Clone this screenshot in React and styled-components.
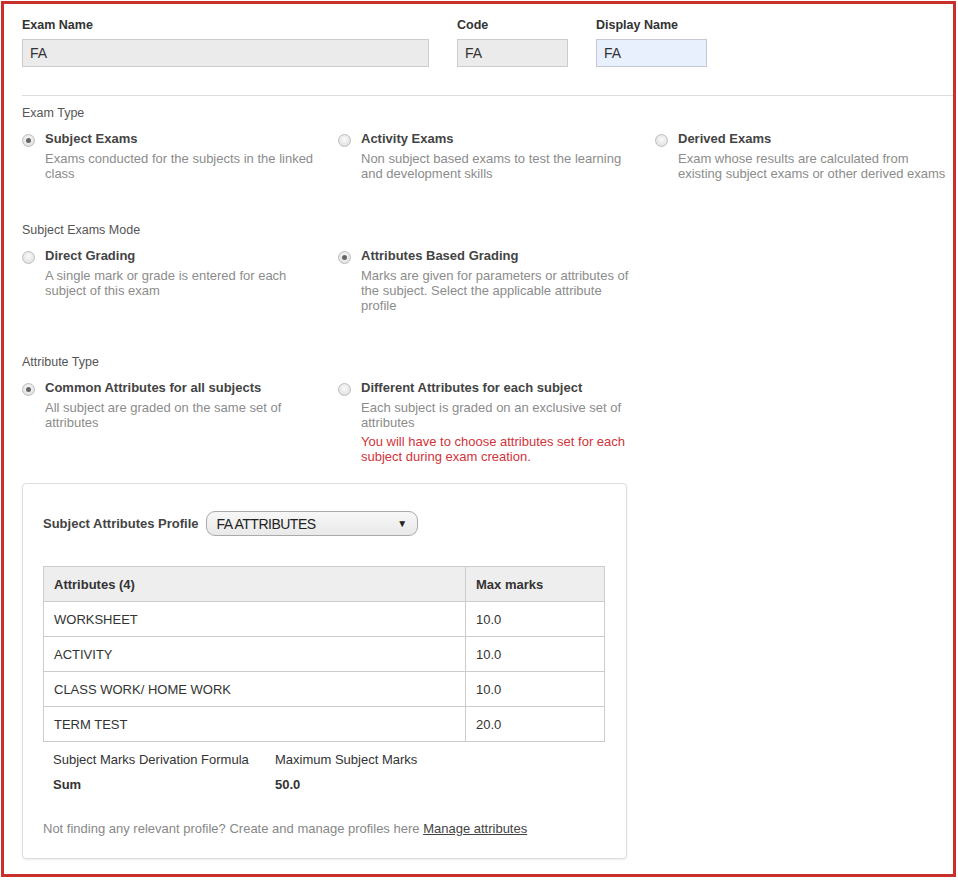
import styled, { createGlobalStyle } from "styled-components"

const GlobalStyle = createGlobalStyle`
  * {
    box-sizing: border-box;
  }
  body {
    margin: 0;
    background: #fff;
    color: #333;
    font-family: "Liberation Sans", Arial, sans-serif;
  }
`

const Frame = styled.div`
  margin: 1px 0 0 1px;
  width: 955px;
  height: 876px;
  border: 3px solid #c9302c;
  padding: 14px 0 0 18px;
  overflow: hidden;
`

const FieldRow = styled.div`
  display: flex;
  gap: 28px;
`

const Field = styled.div`
  display: flex;
  flex-direction: column;
  gap: 6px;
  width: ${(p) => p.width}px;
`

const Label = styled.label`
  font-size: 12.5px;
  line-height: 15px;
  font-weight: bold;
  color: #333;
`

const Input = styled.input`
  height: 28px;
  width: 100%;
  padding: 0 7px;
  border: 1px solid ${(p) => (p.$active ? "#c4c9d4" : "#ccc")};
  background: ${(p) => (p.$active ? "#e8f0fe" : "#ebebeb")};
  font-family: inherit;
  font-size: 14px;
  color: #333;
  outline: none;
`

const Divider = styled.hr`
  margin: 28px 0 0;
  border: 0;
  height: 1px;
  background: #ddd;
`

const Section = styled.section`
  margin-top: ${(p) => (p.first ? 10 : 42)}px;
`

const Heading = styled.div`
  font-size: 12.5px;
  line-height: 15px;
  color: #555;
`

const Options = styled.div`
  display: grid;
  grid-template-columns: 316px 317px 1fr;
  margin-top: 10px;
`

const Option = styled.div`
  display: flex;
  gap: 10px;
`

const Radio = styled.span`
  flex: none;
  width: 13px;
  height: 13px;
  margin-top: 3px;
  border-radius: 50%;
  border: 1px solid #bdbdbd;
  background: radial-gradient(circle at 50% 40%, #fafafa, #dadada);
  display: flex;
  align-items: center;
  justify-content: center;

  &::after {
    content: "";
    display: ${(p) => (p.checked ? "block" : "none")};
    width: 5px;
    height: 5px;
    border-radius: 50%;
    background: #666;
  }
`

const OptionText = styled.div`
  white-space: nowrap;
`

const Title = styled.div`
  font-size: 13px;
  line-height: 15px;
  font-weight: bold;
  color: #444;
  margin-bottom: 5px;
`

const Desc = styled.div`
  font-size: 13px;
  line-height: 15px;
  color: ${(p) => (p.warn ? "#d0343a" : "#8c8c8c")};
`

const Warning = styled.div`
  margin-top: 4px;
`

const Panel = styled.div`
  margin-top: 19px;
  width: 605px;
  border: 1px solid #ddd;
  border-radius: 4px;
  box-shadow: 0 1px 2px rgba(0, 0, 0, 0.08);
  padding: 27px 21px 22px 20px;
`

const ProfileRow = styled.div`
  display: flex;
  align-items: center;
  gap: 7px;
`

const ProfileLabel = styled.span`
  font-size: 13px;
  font-weight: bold;
  color: #444;
`

const Select = styled.div`
  width: 212px;
  height: 25px;
  border: 1px solid #aaa;
  border-radius: 9px;
  background: linear-gradient(#f7f7f7, #e9e9e9);
  display: flex;
  align-items: center;
  justify-content: space-between;
  padding: 0 10px;
  font-size: 14px;
  letter-spacing: -0.5px;
  color: #222;
`

const Caret = styled.span`
  font-size: 10px;
  color: #222;
`

const Table = styled.table`
  margin-top: 30px;
  width: 100%;
  border-collapse: collapse;
  font-size: 13px;
  color: #333;
`

const Cell = styled.td`
  height: 35px;
  padding: 0 10px;
  border: 1px solid #ccc;
  width: ${(p) => (p.wide ? "422px" : "auto")};
`

const HeadCell = styled(Cell).attrs({ as: "th" })`
  text-align: left;
  font-weight: bold;
  background: #eee;
`

const Summary = styled.div`
  display: grid;
  grid-template-columns: 222px auto;
  row-gap: 10px;
  margin-top: 10px;
  padding-left: 10px;
  font-size: 13px;
  line-height: 15px;
  color: #333;
`

const Strong = styled.span`
  font-weight: bold;
`

const Note = styled.p`
  margin: 29px 0 0;
  font-size: 13px;
  line-height: 15px;
  color: #888;
`

const NoteLink = styled.a`
  color: #444;
  text-decoration: underline;
`

// each desc entry is one printed line
const examTypes = [
  {
    title: "Subject Exams",
    desc: ["Exams conducted for the subjects in the linked", "class"],
    checked: true
  },
  {
    title: "Activity Exams",
    desc: ["Non subject based exams to test the learning", "and development skills"]
  },
  {
    title: "Derived Exams",
    desc: ["Exam whose results are calculated from", "existing subject exams or other derived exams"]
  }
]

const modes = [
  {
    title: "Direct Grading",
    desc: ["A single mark or grade is entered for each", "subject of this exam"]
  },
  {
    title: "Attributes Based Grading",
    desc: [
      "Marks are given for parameters or attributes of",
      "the subject. Select the applicable attribute",
      "profile"
    ],
    checked: true
  }
]

const attrTypes = [
  {
    title: "Common Attributes for all subjects",
    desc: ["All subject are graded on the same set of", "attributes"],
    checked: true
  },
  {
    title: "Different Attributes for each subject",
    desc: ["Each subject is graded on an exclusive set of", "attributes"],
    warn: ["You will have to choose attributes set for each", "subject during exam creation."]
  }
]

const attributes = [
  ["WORKSHEET", "10.0"],
  ["ACTIVITY", "10.0"],
  ["CLASS WORK/ HOME WORK", "10.0"],
  ["TERM TEST", "20.0"]
]

const OptionGroup = ({ heading, items, first }) => (
  <Section first={first}>
    <Heading>{heading}</Heading>
    <Options>
      {items.map((item) => (
        <Option key={item.title}>
          <Radio checked={item.checked} />
          <OptionText>
            <Title>{item.title}</Title>
            {item.desc.map((d) => (
              <Desc key={d}>{d}</Desc>
            ))}
            {item.warn && (
              <Warning>
                {item.warn.map((w) => (
                  <Desc warn key={w}>
                    {w}
                  </Desc>
                ))}
              </Warning>
            )}
          </OptionText>
        </Option>
      ))}
    </Options>
  </Section>
)

const App = () => {
  return (
    <>
      <GlobalStyle />
      <Frame>
        <FieldRow>
          <Field width={407}>
            <Label>Exam Name</Label>
            <Input readOnly value="FA" />
          </Field>
          <Field width={111}>
            <Label>Code</Label>
            <Input readOnly value="FA" />
          </Field>
          <Field width={111}>
            <Label>Display Name</Label>
            <Input readOnly value="FA" $active />
          </Field>
        </FieldRow>

        <Divider />

        <OptionGroup first heading="Exam Type" items={examTypes} />
        <OptionGroup heading="Subject Exams Mode" items={modes} />
        <OptionGroup heading="Attribute Type" items={attrTypes} />

        {/* attribute profile box */}
        <Panel>
          <ProfileRow>
            <ProfileLabel>Subject Attributes Profile</ProfileLabel>
            <Select>
              FA ATTRIBUTES
              <Caret>▼</Caret>
            </Select>
          </ProfileRow>

          <Table>
            <thead>
              <tr>
                <HeadCell wide>Attributes (4)</HeadCell>
                <HeadCell>Max marks</HeadCell>
              </tr>
            </thead>
            <tbody>
              {attributes.map(([name, marks]) => (
                <tr key={name}>
                  <Cell wide>{name}</Cell>
                  <Cell>{marks}</Cell>
                </tr>
              ))}
            </tbody>
          </Table>

          <Summary>
            <span>Subject Marks Derivation Formula</span>
            <span>Maximum Subject Marks</span>
            <Strong>Sum</Strong>
            <Strong>50.0</Strong>
          </Summary>

          <Note>
            Not finding any relevant profile? Create and manage profiles here{" "}
            <NoteLink>Manage attributes</NoteLink>
          </Note>
        </Panel>
      </Frame>
    </>
  )
}

export default App
